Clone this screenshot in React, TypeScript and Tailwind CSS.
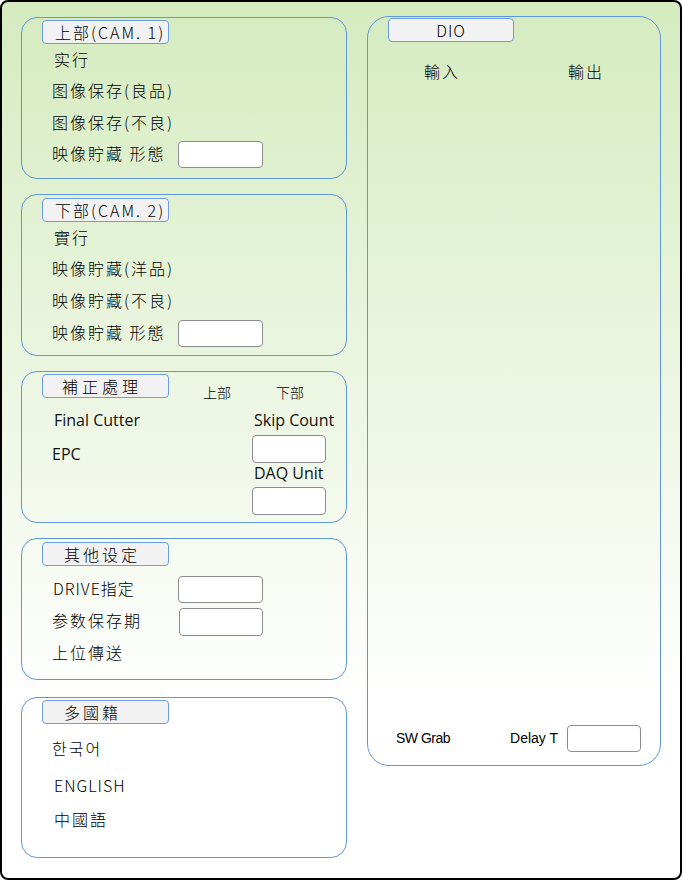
import React from 'react';

const cjk = { fontFamily: '"Noto Sans CJK SC", "Noto Sans CJK TC", "Noto Sans CJK KR", sans-serif', fontWeight: 300 };
const ui = { fontFamily: '"Open Sans", "Noto Sans", sans-serif' };
const small = { fontFamily: '"Liberation Sans", Arial, sans-serif' };

function Title({ text, pl, track = 'tracking-[2px]' }: { text: string; pl: string; track?: string }) {
  return (
    <div
      className={`w-[127px] h-[24px] ${pl} ${track} flex items-center bg-[#f2f2f2] border border-[#6b9ee0] rounded-[4px] text-[16px] text-black leading-none`}
      style={cjk}
    >
      {text}
    </div>
  );
}

function Field({ w = 'w-[85px]', h = 'h-[27px]' }: { w?: string; h?: string }) {
  return <div className={`${w} ${h} shrink-0 bg-white border border-[#8c8c8c] rounded-[4px]`} />;
}

function Row({ children, h = 'h-[31px]' }: { children: React.ReactNode; h?: string }) {
  return (
    <div className={`${h} flex items-center text-[16px] text-black tracking-[2px]`} style={cjk}>
      {children}
    </div>
  );
}

function Group({ h, children }: { h: string; children: React.ReactNode }) {
  return (
    <div className={`${h} w-[326px] border border-[#5f97dc] rounded-[16px] pt-[2px] pl-[20px]`}>
      {children}
    </div>
  );
}

export default function App() {
  return (
    <div className="w-[682px] h-[880px] border-2 border-black rounded-[8px] bg-[linear-gradient(to_bottom,#d5ebbf_0%,#ffffff_80%)] overflow-hidden flex gap-[20px] pl-[19px] pt-[15px]">
      {/* left column */}
      <div className="flex flex-col">
        <Group h="h-[162px]">
          <Title text="上部(CAM. 1)" pl="pl-[12px]" />
          <div className="pl-[10px]">
            <Row><span className="pl-[2px] pb-[2px]">实行</span></Row>
            <Row h="h-[32px]"><span className="pb-[2px]">图像保存(良品)</span></Row>
            <Row><span className="pb-[2px]">图像保存(不良)</span></Row>
            <Row h="h-[32px]">
              <span className="w-[126px] pb-[2px]">映像貯藏 形態</span>
              <Field />
            </Row>
          </div>
        </Group>

        <div className="mt-[15px]">
          <Group h="h-[162px]">
            <div className="mt-[1px]"><Title text="下部(CAM. 2)" pl="pl-[12px]" /></div>
            <div className="pl-[10px]">
              <Row><span className="pl-[2px] pb-[2px]">實行</span></Row>
              <Row h="h-[32px]"><span className="pb-[2px]">映像貯藏(洋品)</span></Row>
              <Row h="h-[32px]"><span className="pb-[2px]">映像貯藏(不良)</span></Row>
              <Row h="h-[32px]">
                <span className="w-[126px] pb-[2px]">映像貯藏 形態</span>
                <Field />
              </Row>
            </div>
          </Group>
        </div>

        <div className="mt-[15px]">
          <Group h="h-[152px]">
            <div className="flex items-start">
              <Title text="補正處理" pl="pl-[19px]" track="tracking-[4px]" />
              <span className="ml-[34px] mt-[11px] text-[14px] leading-none" style={cjk}>上部</span>
              <span className="ml-[45px] mt-[11px] text-[14px] leading-none" style={cjk}>下部</span>
            </div>
            <div className="flex">
              <div className="w-[210px] pl-[10px] flex flex-col text-[16px] text-[#111]" style={ui}>
                <span className="mt-[11px] h-[20px] leading-[20px] pl-[2px]">Final Cutter</span>
                <span className="mt-[14px] h-[20px] leading-[20px]">EPC</span>
              </div>
              <div className="flex flex-col text-[16px] text-[#111]" style={ui}>
                <span className="mt-[11px] h-[20px] leading-[20px] pl-[2px] whitespace-nowrap">Skip Count</span>
                <div className="mt-[5px]"><Field w="w-[74px]" h="h-[28px]" /></div>
                <span className="h-[20px] leading-[20px] pl-[2px] whitespace-nowrap">DAQ Unit</span>
                <div className="mt-[4px]"><Field w="w-[74px]" h="h-[28px]" /></div>
              </div>
            </div>
          </Group>
        </div>

        <div className="mt-[15px]">
          <Group h="h-[142px]">
            <div className="mt-[1px]"><Title text="其他设定" pl="pl-[21px]" track="tracking-[3px]" /></div>
            <div className="pl-[10px] mt-[8px]">
              <Row>
                <span className="w-[126px] pl-[1px] pb-[4px] tracking-[1px]">DRIVE指定</span>
                <Field />
              </Row>
              <Row h="h-[33px]">
                <span className="w-[127px] pb-[4px]">参数保存期</span>
                <Field h="h-[28px]" w="w-[84px]" />
              </Row>
              <Row h="h-[32px]"><span className="pb-[4px]">上位傳送</span></Row>
            </div>
          </Group>
        </div>

        <div className="mt-[17px]">
          <Group h="h-[161px]">
            <Title text="多國籍" pl="pl-[21px]" track="tracking-[3px]" />
            <div className="pl-[10px] mt-[6px]">
              <Row h="h-[37px]"><span className="pb-[2px]">한국어</span></Row>
              <Row h="h-[37px]"><span className="pl-[2px] pb-[2px] tracking-[1px]">ENGLISH</span></Row>
              <Row h="h-[31px]"><span className="pl-[2px] pb-[2px]">中國語</span></Row>
            </div>
          </Group>
        </div>
      </div>

      {/* right column */}
      <div className="w-[294px] h-[750px] mt-[-1px] border border-[#5f97dc] rounded-[22px] pt-[1px] pl-[20px] pr-[16px] pb-[13px] flex flex-col">
        <div
          className="w-[126px] h-[24px] flex items-center justify-center bg-[#f2f2f2] border border-[#6b9ee0] rounded-[4px] text-[16px] text-black tracking-[1px]"
          style={cjk}
        >
          DIO
        </div>
        <div className="flex mt-[17px] text-[16px] text-black tracking-[2px]" style={cjk}>
          <span className="ml-[36px]">輸入</span>
          <span className="ml-[108px]">輸出</span>
        </div>
        <div className="mt-auto flex items-center text-[14px] text-black whitespace-nowrap" style={small}>
          <span className="ml-[8px] tracking-[-0.5px]">SW Grab</span>
          <span className="ml-[60px]">Delay T</span>
          <div className="ml-[9px]"><Field w="w-[74px]" h="h-[27px]" /></div>
        </div>
      </div>
    </div>
  );
}
